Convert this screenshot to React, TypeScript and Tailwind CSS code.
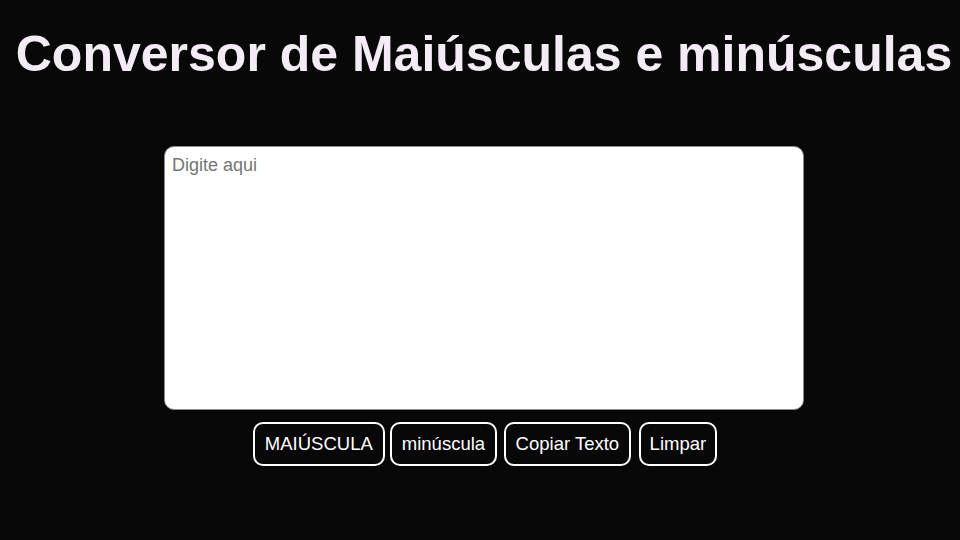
import React from "react";

export default function App() {
  const btn =
    "h-[44px] border-2 border-white rounded-[10px] bg-[#080808] text-white text-[18.5px] leading-none";
  return (
    <div
      className="w-[960px] h-[540px] bg-[#080808] flex flex-col items-center pl-[8px]"
      style={{ fontFamily: '"Liberation Sans", Arial, sans-serif' }}
    >
      <h1 className="mt-[25px] text-[50px] leading-[58px] font-bold text-[#f3ecf5] whitespace-nowrap">
        Conversor de Maiúsculas e minúsculas
      </h1>
      <textarea
        placeholder="Digite aqui"
        className="mt-[63px] w-[640px] h-[264px] bg-white border border-[#8a8a8a] rounded-[10px] px-[7px] py-[5px] text-[18px] text-black placeholder:text-[#757575] resize-none outline-none"
        style={{ fontFamily: '"Liberation Sans", Arial, sans-serif' }}
      />
      <div className="mt-[12px] ml-[2px] flex gap-[5px]">
        <button className={`${btn} px-[10px]`}>MAIÚSCULA</button>
        <button className={`${btn} px-[10px]`}>minúscula</button>
        <button className={`${btn} px-[9.5px] ml-[2px]`}>Copiar Texto</button>
        <button className={`${btn} px-[9px] ml-[3px]`}>Limpar</button>
      </div>
    </div>
  );
}
